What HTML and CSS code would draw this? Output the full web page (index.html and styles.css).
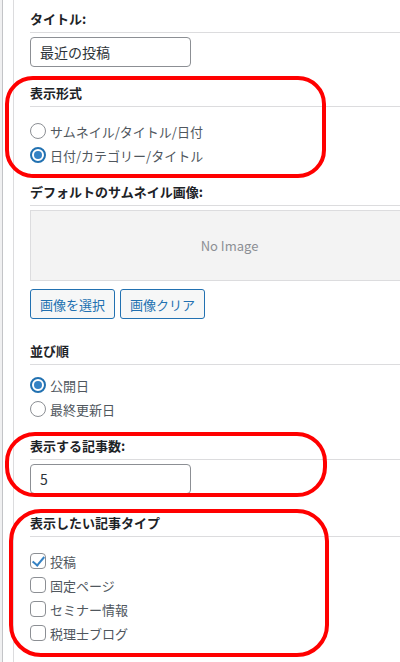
FILE: index.html
```html
<!DOCTYPE html>
<html lang="ja">
<head>
    <meta charset="UTF-8">
    <title>ウィジェット設定</title>
    <link rel="stylesheet" href="styles.css">
</head>
<body>
<div class="frame">
    <div class="widget">
        <h4 class="field-title">タイトル:</h4>
        <input class="text-input" type="text" value="最近の投稿">

        <h4 class="field-title gap-a">表示形式</h4>
        <ul class="options opt-a">
            <li><label><input type="radio" name="layout"><span>サムネイル/タイトル/日付</span></label></li>
            <li><label><input type="radio" name="layout" checked><span>日付/カテゴリー/タイトル</span></label></li>
        </ul>

        <h4 class="field-title gap-b">デフォルトのサムネイル画像:</h4>
        <div class="thumb">No Image</div>
        <div class="buttons">
            <button class="btn" type="button">画像を選択</button>
            <button class="btn" type="button">画像クリア</button>
        </div>

        <h4 class="field-title gap-c">並び順</h4>
        <ul class="options opt-b">
            <li><label><input type="radio" name="order" checked><span>公開日</span></label></li>
            <li><label><input type="radio" name="order"><span>最終更新日</span></label></li>
        </ul>

        <h4 class="field-title gap-d">表示する記事数:</h4>
        <input class="text-input" type="text" value="5">

        <h4 class="field-title gap-e">表示したい記事タイプ</h4>
        <ul class="options opt-a">
            <li><label><input type="checkbox" checked><span>投稿</span></label></li>
            <li><label><input type="checkbox"><span>固定ページ</span></label></li>
            <li><label><input type="checkbox"><span>セミナー情報</span></label></li>
            <li><label><input type="checkbox"><span>税理士ブログ</span></label></li>
        </ul>
    </div>

    <!-- 注釈の赤枠 -->
    <div class="mark mark-1"></div>
    <div class="mark mark-2"></div>
    <div class="mark mark-3"></div>
</div>
</body>
</html>
```

FILE: styles.css
```css
*{margin:0;padding:0;box-sizing:border-box;list-style:none;}
html,body{height:100%;}
body{background:#f0f0f1;overflow:hidden;
    font-family:"Noto Sans CJK JP","Noto Sans",sans-serif;font-size:13px;color:#1d2327;}

.frame{position:relative;height:100%;margin-left:2px;padding-left:10px;
    background:#fff;border-left:1px solid #c3c4c7;}
.widget{height:100%;padding:9px 0 0 16px;border-left:1px solid #dcdcde;}

.field-title{font-size:13px;font-weight:bold;line-height:20px;padding-bottom:3px;
    border-bottom:1px solid #dcdcde;}
.gap-a{margin-top:16px;}
.gap-b{margin-top:15px;}
.gap-c{margin-top:22px;}
.gap-d{margin-top:15px;}
.gap-e{margin-top:19px;}

.text-input{display:block;width:161px;height:30px;margin-top:4px;padding:0 9px;
    border:1px solid #8c8f94;border-radius:4px;background:#fff;
    font-family:inherit;font-size:14px;color:#2c3338;}

.options li{height:24px;}
.opt-a{margin-top:12px;}
.opt-b{margin-top:8px;}
.options label{display:flex;align-items:center;height:24px;color:#50575e;font-size:13px;}
.options input{-webkit-appearance:none;appearance:none;flex:none;width:16px;height:16px;
    margin-right:4px;border:1px solid #8c8f94;background:#fff;position:relative;}
.options input[type=radio]{border-radius:50%;}
.options input[type=radio]:checked{border:2px solid #2271b1;}
.options input[type=radio]:checked::after{content:"";position:absolute;left:2px;top:2px;
    width:8px;height:8px;border-radius:50%;background:#3582c4;}
.options input[type=checkbox]{border-radius:4px;}
.options input[type=checkbox]:checked::after{content:"";position:absolute;left:4px;top:0px;
    width:5px;height:10px;border:solid #3582c4;border-width:0 2.5px 2.5px 0;transform:rotate(40deg);}

/* 右側は画面外に続くので、文字の中心を少し右へ */
.thumb{height:71px;margin-top:4px;padding-left:28px;border:1px solid #dcdcde;border-right:0;
    background:#f3f3f3;display:flex;align-items:center;justify-content:center;
    color:#8c8f94;font-size:13px;}

.buttons{display:flex;gap:5px;margin-top:8px;}
.btn{height:30px;padding:0 9px;border:1px solid #2271b1;border-radius:3px;background:#f6f7f7;
    color:#2271b1;font-family:inherit;font-size:13px;}

.mark{position:absolute;border:4px solid #ff0000;}
.mark-1{left:2px;top:76px;width:321px;height:102px;border-radius:28px;}
.mark-2{left:2px;top:432px;width:322px;height:65px;border-radius:30px;}
.mark-3{left:6px;top:509px;width:320px;height:148px;border-radius:32px;}
```
